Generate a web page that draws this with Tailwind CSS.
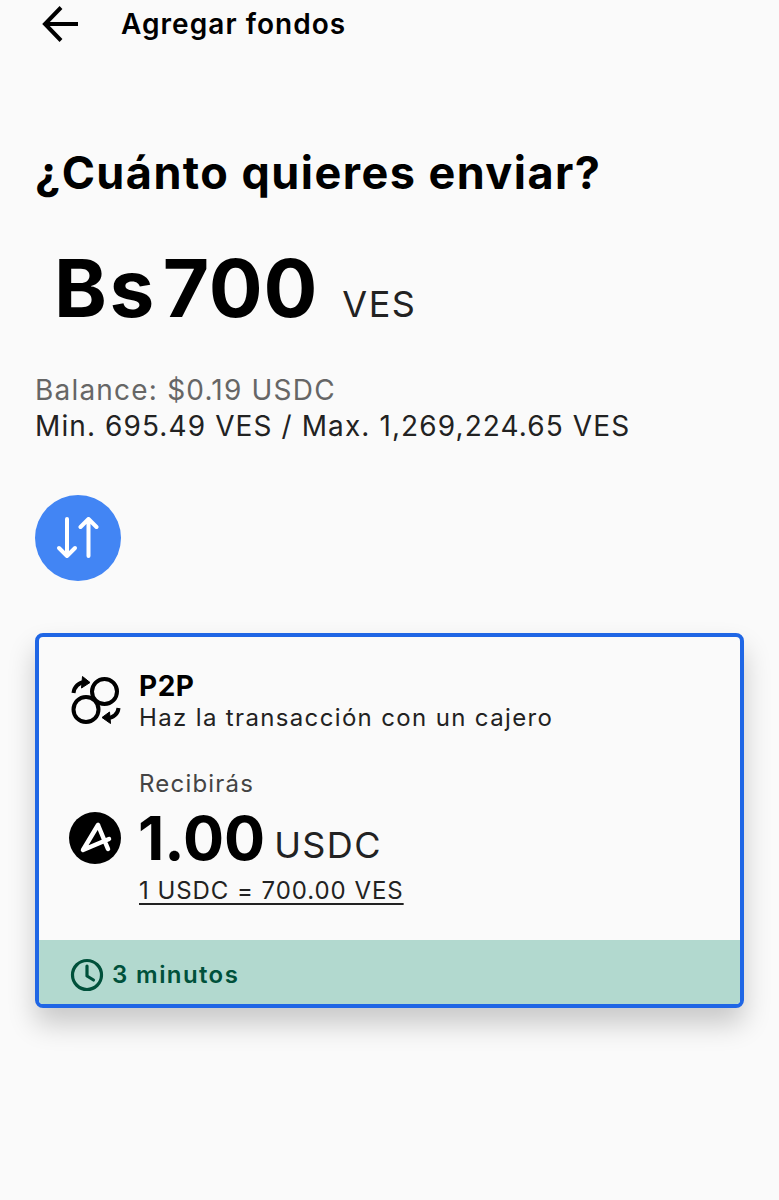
<!DOCTYPE html>
<html lang="es">
<head>
  <meta charset="UTF-8">
  <meta name="viewport" content="width=device-width, initial-scale=1">
  <title>Agregar fondos</title>
  <script src="https://cdn.jsdelivr.net/npm/@tailwindcss/browser@4"></script>
</head>
<body class="bg-[#fafafa] text-black font-['Inter',sans-serif] h-[1200px] overflow-hidden">

  <!-- Header -->
  <header class="flex items-center h-[48px] pl-[42px]">
    <svg class="w-[36px] h-[36px]" viewBox="0 0 36 36" fill="none" stroke="#000" stroke-width="4">
      <path d="M36 18H4"/>
      <path d="M19 1.500 3 18 19 34.500"/>
    </svg>
    <h1 class="ml-[43px] text-[28px] font-semibold tracking-[1.05px]">Agregar fondos</h1>
  </header>

  <main class="px-[35px]">
    <h2 class="mt-[98px] text-[45px] leading-[54px] font-bold tracking-[1.45px]">¿Cuánto quieres enviar?</h2>

    <!-- Amount -->
    <div class="flex items-baseline mt-[46px] pl-[19px] h-[84px]">
      <span class="text-[80px] leading-[84px] font-bold tracking-[2.5px]">Bs</span>
      <span class="ml-[6px] text-[80px] leading-[84px] font-bold tracking-[0.8px]">700</span>
      <span class="ml-[24px] text-[36px] text-[#222] tracking-[1.5px]">VES</span>
    </div>

    <div class="mt-[42px] text-[28px] leading-[36px]">
      <p class="text-[#666] tracking-[1.2px]">Balance: $0.19 USDC</p>
      <p class="text-[#222] tracking-[1.1px]">Min. 695.49 VES / Max. 1,269,224.65 VES</p>
    </div>

    <!-- Switch -->
    <button class="flex items-center justify-center mt-[51px] w-[86px] h-[86px] rounded-full bg-[#4285f4]">
      <svg class="w-[46px] h-[42px]" viewBox="0 0 46 42" fill="none" stroke="#fff" stroke-width="4" stroke-linecap="round" stroke-linejoin="round">
        <path d="M12 2V39M4 31 12 39 20 31"/>
        <path d="M33.500 39V2M25.500 10 33.500 2 41.500 10"/>
      </svg>
    </button>

    <!-- P2P card -->
    <section class="mt-[52px] w-[709px] h-[375px] border-[4px] border-[#1f66e5] rounded-[8px] overflow-hidden bg-[#fafafa] shadow-[0_16px_28px_rgba(0,0,0,0.2)] flex flex-col">
      <div class="flex-1 pl-[31px]">
        <div class="flex items-center mt-[33px]">
          <svg class="w-[52px] h-[52px] mb-[4px]" viewBox="0 0 52 52" fill="none" stroke="#000" stroke-width="4">
            <circle cx="34.500" cy="17.500" r="12.500"/>
            <circle cx="16" cy="35.500" r="12.500"/>
            <path d="M3.500 19C4 13 9 8 15 8"/>
            <path d="M12.500 2.500 20 8.500 11.500 14Z" fill="#000" stroke-width="1"/>
            <path d="M48.500 34C48 40 43 44 37 44"/>
            <path d="M39.500 38 32 43.500 40.500 49.500Z" fill="#000" stroke-width="1"/>
          </svg>
          <div class="ml-[17px]">
            <p class="text-[28px] leading-[32px] font-bold tracking-[0.5px]">P2P</p>
            <p class="text-[24px] leading-[32px] text-[#222] tracking-[1.35px]">Haz la transacción con un cajero</p>
          </div>
        </div>
        <p class="mt-[34px] ml-[69px] text-[24px] leading-[32px] text-[#444] tracking-[1.2px]">Recibirás</p>
        <div class="flex items-center h-[64px] mt-[6px]">
          <svg class="w-[52px] h-[52px] -ml-[1px] mr-[1px]" viewBox="0 0 52 52" fill="none">
            <circle cx="26" cy="26" r="26" fill="#000"/>
            <path d="M29 13 14 38 40 27M29 13 39 37" stroke="#fff" stroke-width="4.500" stroke-linecap="round" stroke-linejoin="round"/>
          </svg>
          <span class="ml-[16px] text-[61px] leading-[64px] font-bold">1.00</span>
          <span class="ml-[9px] mt-[14px] text-[36px] text-[#222] tracking-[1.4px]">USDC</span>
        </div>
        <p class="mt-[5px] ml-[69px] text-[24px] leading-[32px] text-[#222] underline underline-offset-4 tracking-[0.95px]">1 USDC = 700.00 VES</p>
      </div>
      <!-- Time -->
      <div class="flex items-center h-[64px] pt-[5px] pl-[31px] bg-[#b2d9cf] text-[#00513b]">
        <svg class="w-[34px] h-[34px]" viewBox="0 0 34 34" fill="none" stroke="#00513b" stroke-width="3.200" stroke-linecap="round" stroke-linejoin="round">
          <circle cx="17" cy="17" r="14.500"/>
          <path d="M17 8V18L23.500 22"/>
        </svg>
        <span class="ml-[8px] text-[24px] font-semibold tracking-[1.4px]">3 minutos</span>
      </div>
    </section>
  </main>

</body>
</html>
